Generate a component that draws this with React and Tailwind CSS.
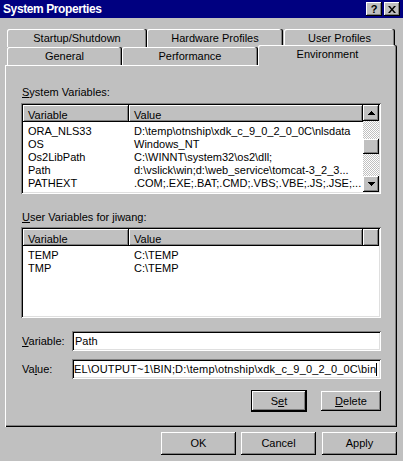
import React from 'react';

const RAISED = 'shadow-[inset_-1px_-1px_#000,inset_1px_1px_#fff,inset_-2px_-2px_#808080]';
const SUNKEN = 'shadow-[inset_1px_1px_#808080,inset_-1px_-1px_#fff,inset_2px_2px_#000,inset_-2px_-2px_#dfdfdf]';
const TAB = 'shadow-[inset_-1px_0_#000,inset_-2px_0_#808080,inset_1px_1px_#fff]';

const systemVars = [
    ['ORA_NLS33', 'D:\\temp\\otnship\\xdk_c_9_0_2_0_0C\\nlsdata'],
    ['OS', 'Windows_NT'],
    ['Os2LibPath', 'C:\\WINNT\\system32\\os2\\dll;'],
    ['Path', 'd:\\vslick\\win;d:\\web_service\\tomcat-3_2_3...'],
    ['PATHEXT', '.COM;.EXE;.BAT;.CMD;.VBS;.VBE;.JS;.JSE;...'],
];

const userVars = [
    ['TEMP', 'C:\\TEMP'],
    ['TMP', 'C:\\TEMP'],
];

function Arrow({ down }) {
    return (
        <svg width="7" height="4" viewBox="0 0 7 4" className={down ? 'rotate-180' : ''}>
            <path d="M3 0h1v1h1v1h1v1h1v1H0V3h1V2h1V1h1z" fill="#000" />
        </svg>
    );
}

function HeaderCell({ className, children }) {
    return (
        <div className={`h-full pl-[5px] pt-[4px] whitespace-nowrap overflow-hidden ${RAISED} ${className}`}>
            {children}
        </div>
    );
}

function ScrollBar() {
    return (
        <div className="w-[16px] h-full flex flex-col shrink-0">
            <div className={`h-[16px] shrink-0 bg-[#c0c0c0] flex items-center justify-center ${RAISED}`}>
                <Arrow />
            </div>
            <div className="flex-1 bg-[repeating-conic-gradient(#fff_0_25%,#c0c0c0_0_50%)] bg-size-[2px_2px]">
                <div className={`mt-[18px] h-[15px] bg-[#c0c0c0] ${RAISED}`} />
            </div>
            <div className={`h-[16px] shrink-0 bg-[#c0c0c0] flex items-center justify-center ${RAISED}`}>
                <Arrow down />
            </div>
        </div>
    );
}

function ListBox({ rows, scroll }) {
    return (
        <div className={`w-[360px] h-[91px] bg-white p-[2px] flex ${SUNKEN}`}>
            <div className="flex-1 flex flex-col overflow-hidden">
                <div className="flex h-[17px] shrink-0 bg-[#c0c0c0]">
                    <HeaderCell className="w-[106px]">Variable</HeaderCell>
                    <HeaderCell className="w-[234px]">Value</HeaderCell>
                    {!scroll && <HeaderCell className="flex-1" />}
                </div>
                <div className="pt-[3px]">
                    {rows.map(([name, value]) => (
                        <div key={name} className="flex h-[13px] whitespace-nowrap">
                            <div className="w-[106px] pl-[5px]">{name}</div>
                            <div className="pl-[5px]">{value}</div>
                        </div>
                    ))}
                </div>
            </div>
            {scroll && <ScrollBar />}
        </div>
    );
}

function Tab({ className, children }) {
    return (
        <div className={`h-full rounded-t-[2px] bg-[#c0c0c0] flex items-center justify-center ${TAB} ${className}`}>
            {children}
        </div>
    );
}

function Button({ className, children }) {
    return (
        <div className={`bg-[#c0c0c0] flex items-center justify-center ${RAISED} ${className}`}>
            {children}
        </div>
    );
}

export default function App() {
    return (
        <div className="w-[403px] h-[461px] bg-[#c0c0c0] overflow-hidden text-[11px] leading-[13px] text-black font-['Liberation_Sans',Arial,sans-serif] select-none">
            {/* title bar */}
            <div className="h-[18px] bg-[#000080] flex items-center pl-[3px] pr-[3px]">
                <span className="text-white font-bold text-[12px] tracking-[-0.4px] pt-[1px]">System Properties</span>
                <div className="ml-auto flex gap-[2px]">
                    <div className={`w-[16px] h-[14px] bg-[#c0c0c0] flex items-center justify-center font-bold text-[11px] ${RAISED}`}>?</div>
                    <div className={`w-[16px] h-[14px] bg-[#c0c0c0] flex items-center justify-center ${RAISED}`}>
                        <svg width="8" height="7" viewBox="0 0 8 7">
                            <path d="M0 0h2l2 2.4L6 0h2L5 3.5 8 7H6L4 4.6 2 7H0l3-3.5z" fill="#000" />
                        </svg>
                    </div>
                </div>
            </div>

            {/* tabs */}
            <div className="mt-[11px]">
                <div className="flex h-[18px] pl-[7px]">
                    <Tab className="w-[140px]">Startup/Shutdown</Tab>
                    <Tab className="w-[136px]">Hardware Profiles</Tab>
                    <Tab className="w-[111px] ml-[1px]">User Profiles</Tab>
                </div>
                <div className="flex items-end h-[20px] -mt-[2px] pl-[7px]">
                    <Tab className="w-[115px] !h-[18px]">General</Tab>
                    <Tab className="w-[136px] !h-[18px]">Performance</Tab>
                    <div className={`w-[139px] h-[21px] -mb-[1px] relative z-10 rounded-t-[2px] bg-[#c0c0c0] flex justify-center pt-[3px] ${TAB}`}>
                        Environment
                    </div>
                </div>
            </div>

            {/* page */}
            <div className="ml-[5px] w-[392px] h-[362px] pt-[21px] pl-[16px] flex flex-col shadow-[inset_1px_1px_#fff,inset_-1px_-1px_#000,inset_-2px_-2px_#808080]">
                <div className="ml-[1px]"><span className="underline">S</span>ystem Variables:</div>
                <div className="mt-[4px]">
                    <ListBox rows={systemVars} scroll />
                </div>
                <div className="mt-[17px] ml-[1px]"><span className="underline">U</span>ser Variables for jiwang:</div>
                <div className="mt-[3px]">
                    <ListBox rows={userVars} />
                </div>

                <div className="mt-[13px] flex items-center h-[20px]">
                    <div className="w-[51px] pl-[1px]"><span className="underline">V</span>ariable:</div>
                    <div className={`w-[309px] h-full bg-white flex items-center pl-[3px] ${SUNKEN}`}>Path</div>
                </div>
                <div className="mt-[8px] flex items-center h-[20px]">
                    <div className="w-[51px] pl-[1px]">Va<span className="underline">l</span>ue:</div>
                    <div className={`w-[309px] h-full bg-white flex items-center pl-[2px] pr-[3px] overflow-hidden whitespace-nowrap ${SUNKEN}`}>
                        <span className="tracking-[0.15px]">EL\OUTPUT~1\BIN;D:\temp\otnship\xdk_c_9_0_2_0_0C\bin</span>
                        <span className="w-[1px] h-[13px] bg-black shrink-0" />
                    </div>
                </div>

                <div className="mt-[11px] w-[360px] h-[22px] flex items-center justify-end">
                    <div className="w-[56px] h-[22px] border border-black">
                        <Button className="w-full h-full"><span>S<span className="underline">e</span>t</span></Button>
                    </div>
                    <Button className="ml-[14px] w-[60px] h-[20px]"><span><span className="underline">D</span>elete</span></Button>
                </div>
            </div>

            {/* dialog buttons */}
            <div className="mt-[5px] flex pl-[161px]">
                <Button className="w-[75px] h-[23px]">OK</Button>
                <Button className="ml-[5px] w-[75px] h-[23px]">Cancel</Button>
                <Button className="ml-[6px] w-[75px] h-[23px]">Apply</Button>
            </div>
        </div>
    );
}
